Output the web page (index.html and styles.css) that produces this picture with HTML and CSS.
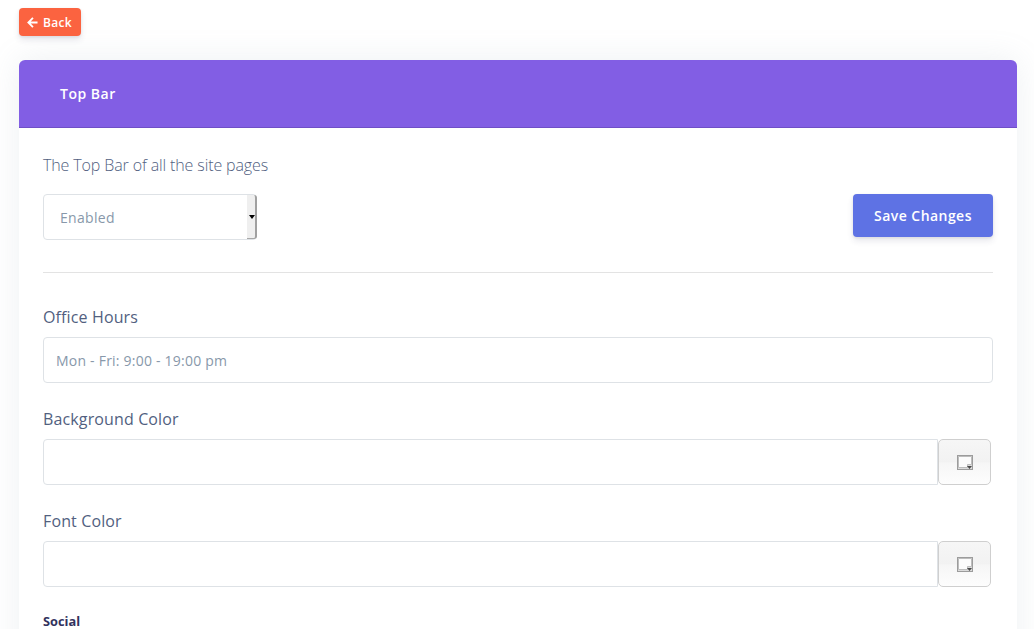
FILE: index.html
```html
<!DOCTYPE html>
<html lang="en">
<head>
<meta charset="utf-8">
<title>Top Bar</title>
<link rel="stylesheet" href="styles.css">
</head>
<body>
<main class="page">
  <a class="back-btn" href="#">
    <svg class="back-icon" viewBox="0 0 12 12" aria-hidden="true"><path d="M11.500 6H1.500M6.500 1 1.500 6 6.500 11" fill="none" stroke="currentColor" stroke-width="2"/></svg>
    <span>Back</span>
  </a>
  <section class="card">
    <header class="card-header"><h1 class="card-title">Top Bar</h1></header>
    <div class="card-body">
      <p class="lead">The Top Bar of all the site pages</p>
      <div class="status-row">
        <div class="select-wrap">
          <select class="status-select"><option>Enabled</option><option>Disabled</option></select>
          <span class="select-button" aria-hidden="true"><span class="select-arrow"></span></span>
        </div>
        <button class="save-btn" type="button">Save Changes</button>
      </div>
      <hr class="divider">
      <div class="field field-first">
        <label class="field-label">Office Hours</label>
        <input class="text-input" type="text" value="Mon - Fri: 9:00 - 19:00 pm">
      </div>
      <div class="field">
        <label class="field-label">Background Color</label>
        <div class="color-group">
          <input class="text-input color-input" type="text">
          <span class="color-addon">
            <svg class="picker-icon" viewBox="0 0 16 15" aria-hidden="true"><rect x="0.500" y="0.500" width="15" height="14" fill="#dcdcdc" stroke="#9c9c9c"/><path d="M1.500 1.500h13v8h-4v3h-9z" fill="#fcfcfc" stroke="#bdbdbd"/><path d="M10 11h5l-2.500 3z" fill="#4a4a4a"/></svg>
          </span>
        </div>
      </div>
      <div class="field">
        <label class="field-label">Font Color</label>
        <div class="color-group">
          <input class="text-input color-input" type="text">
          <span class="color-addon">
            <svg class="picker-icon" viewBox="0 0 16 15" aria-hidden="true"><rect x="0.500" y="0.500" width="15" height="14" fill="#dcdcdc" stroke="#9c9c9c"/><path d="M1.500 1.500h13v8h-4v3h-9z" fill="#fcfcfc" stroke="#bdbdbd"/><path d="M10 11h5l-2.500 3z" fill="#4a4a4a"/></svg>
          </span>
        </div>
      </div>
      <h2 class="section-title">Social</h2>
    </div>
  </section>
</main>
</body>
</html>
```
FILE: styles.css
```css
* { box-sizing: border-box; }
html, body { margin: 0; height: 100%; overflow: hidden; background: #fff; }
body { font-family: "Open Sans", sans-serif; color: #525f7f; }
.page { padding: 8px 17px 0 19px; }
.back-btn {
  display: inline-flex; align-items: center; gap: 5px;
  height: 28px; width: 62px; padding-left: 8px;
  background: #fb6340; color: #fff; border-radius: 4px;
  font-size: 12px; font-weight: 600; letter-spacing: .3px; text-decoration: none;
  box-shadow: 0 4px 6px rgba(50,50,93,.11), 0 1px 3px rgba(0,0,0,.08);
}
.back-icon { width: 11px; height: 11px; }
.card {
  margin-top: 24px; background: #fff; border-radius: 6px 6px 0 0; min-height: 700px;
  box-shadow: 0 0 32px rgba(136,152,170,.15);
}
.card-header {
  height: 68px; padding: 0 41px; display: flex; align-items: center;
  background: #825ee4; border-bottom: 1px solid #6f4fc6; border-radius: 6px 6px 0 0;
}
.card-title { margin: 0; font-size: 14px; font-weight: 600; letter-spacing: .5px; color: #fff; }
.card-body { padding: 26px 24px 0; }
.lead { margin: 0; font-size: 16px; line-height: 22px; font-weight: 300; letter-spacing: -.12px; color: #525f7f; }
.status-row { display: flex; justify-content: space-between; align-items: flex-start; margin-top: 18px; }
.select-wrap { position: relative; width: 214px; height: 46px; }
.status-select {
  appearance: none; display: block; width: 100%; height: 100%; padding: 0 12px 0 16px; background: #fff;
  border: 1px solid #dee2e6; border-radius: 4px;
  font: 400 14px "Open Sans", sans-serif; letter-spacing: .3px; color: #8898aa;
}
.select-button {
  position: absolute; top: 1px; right: 0; bottom: 1px; width: 10px;
  background: #efefef; border-right: 2px solid #a0a0a0; border-bottom: 1px solid #a8a8a8;
  border-radius: 0 3px 3px 0; pointer-events: none;
}
.select-arrow {
  position: absolute; left: 2px; top: 20px; width: 0; height: 0;
  border: 3px solid transparent; border-top: 4px solid #000; border-bottom: 0;
}
.save-btn {
  width: 140px; height: 43px; border: 0; border-radius: 4px; background: #5e72e4; color: #fff;
  font: 600 14px "Open Sans", sans-serif; letter-spacing: .45px;
  box-shadow: 0 4px 6px rgba(50,50,93,.11), 0 1px 3px rgba(0,0,0,.08);
}
.divider { margin: 32px 0 0; border: 0; border-top: 1px solid #e3e3e3; }
.field { margin-top: 24px; }
.field-first { margin-top: 32px; }
.field-label { display: block; font-size: 16px; line-height: 24px; letter-spacing: .13px; color: #525f7f; margin-bottom: 8px; }
.text-input {
  display: block; width: 100%; height: 46px; padding: 0 12px; background: #fff;
  border: 1px solid #dee2e6; border-radius: 4px;
  font: 400 14px "Open Sans", sans-serif; letter-spacing: .22px; color: #8898aa;
}
.color-group { display: flex; padding-right: 2px; }
.color-input { flex: 1; min-width: 0; border-radius: 4px 0 0 4px; }
.color-addon {
  flex: none; width: 53px; height: 46px; display: flex; align-items: center; justify-content: center;
  border: 1px solid #cfcfcf; border-radius: 5px;
  background: linear-gradient(#f6f6f6, #f2f2f2 50%, #f6f6f6 52%, #fdfdfd);
}
.picker-icon { width: 16px; height: 15px; }
.section-title { margin: 26px 0 0; font-size: 12.800px; line-height: 16px; font-weight: 700; color: #32325d; }
```
